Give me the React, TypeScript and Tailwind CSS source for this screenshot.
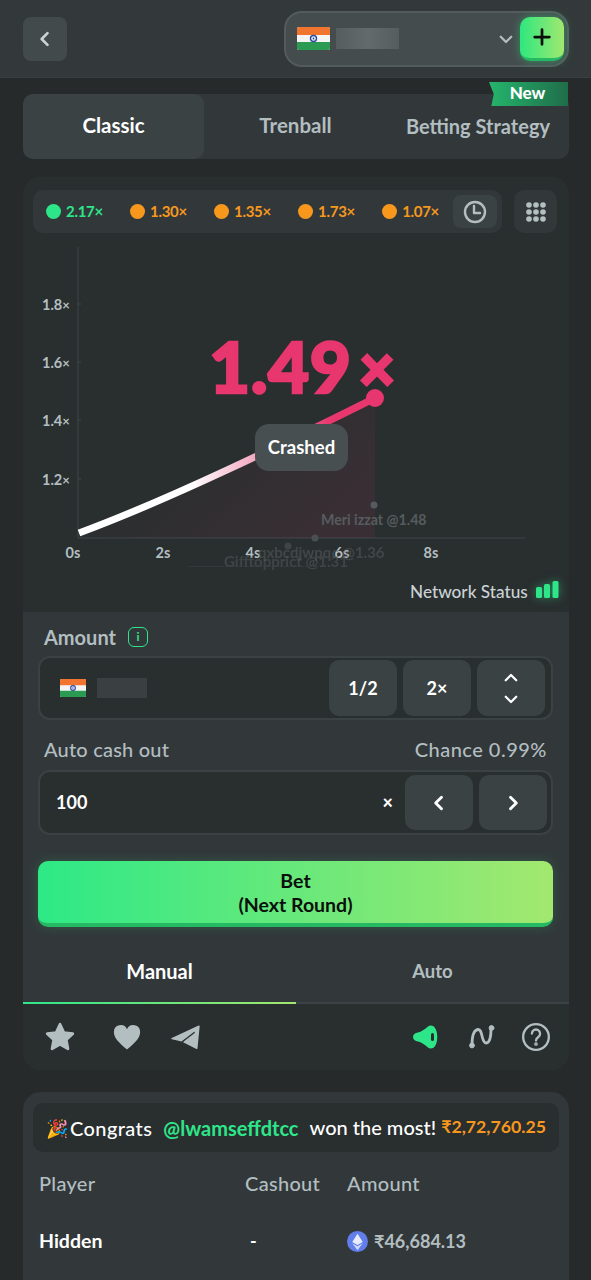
import React from "react";

const font = { fontFamily: '"Lato", "Noto Sans", sans-serif' };

function Flag({ w, h }: { w: number; h: number }) {
  return (
    <svg width={w} height={h} viewBox="0 0 33 23" preserveAspectRatio="none" className="shrink-0">
      <rect width="33" height="23" rx="2" fill="#f4f4f4" />
      <path d="M0 2a2 2 0 0 1 2-2h29a2 2 0 0 1 2 2v6H0z" fill="#f2752f" />
      <path d="M0 15h33v6a2 2 0 0 1-2 2H2a2 2 0 0 1-2-2z" fill="#2b9a52" />
      <circle cx="16.5" cy="11.5" r="3" fill="none" stroke="#2a4aa0" strokeWidth="1.4" />
      <circle cx="16.5" cy="11.5" r="0.9" fill="#2a4aa0" />
    </svg>
  );
}

function Dot({ color, value, text }: { color: string; value: string; text: string }) {
  return (
    <div className="flex items-center gap-[5px]">
      <span className={`h-[15px] w-[15px] rounded-full ${color}`} />
      <span className={`text-[15px] font-bold tracking-[-0.3px] ${text}`}>{value}</span>
    </div>
  );
}

function Chevron({ d, size = 22, stroke = "#fff", w = 3 }: { d: string; size?: number; stroke?: string; w?: number }) {
  return (
    <svg width={size} height={size} viewBox="0 0 24 24" fill="none" stroke={stroke} strokeWidth={w} strokeLinecap="round" strokeLinejoin="round">
      <path d={d} />
    </svg>
  );
}

function Chart() {
  const axis = "#3f4648";
  const label = "#b3bec1";
  return (
    <div className="relative h-[373px] w-[546px]">
      <svg width="546" height="373" viewBox="0 0 546 373" className="block" style={font}>
        <defs>
          <linearGradient id="line" x1="55" y1="0" x2="352" y2="0" gradientUnits="userSpaceOnUse">
            <stop offset="0.38" stopColor="#ffffff" />
            <stop offset="0.66" stopColor="#f08fae" />
            <stop offset="0.85" stopColor="#e8366e" />
          </linearGradient>
          <linearGradient id="fill" x1="0" y1="0" x2="1" y2="0.55">
            <stop offset="0.35" stopColor="#e8366e" stopOpacity="0" />
            <stop offset="1" stopColor="#e8366e" stopOpacity="0.08" />
          </linearGradient>
        </defs>
        <path d="M55 8V299H502" fill="none" stroke={axis} strokeWidth="1" />
        {[65, 123, 181, 240].map((y) => (
          <path key={y} d={`M55 ${y}h3`} stroke={axis} />
        ))}
        {[["1.8", 65], ["1.6", 123], ["1.4", 181], ["1.2", 240]].map(([t, y]) => (
          <text key={t} x="19" y={Number(y) + 6} fontSize="14.5" fontWeight="700" fill={label}>
            {t}
            <tspan fontSize="13">×</tspan>
          </text>
        ))}
        {[["0s", 50], ["2s", 140], ["4s", 230], ["6s", 319], ["8s", 408]].map(([t, x]) => (
          <text key={t} x={x} y="319" textAnchor="middle" fontSize="14.5" fontWeight="700" fill={label}>
            {t}
          </text>
        ))}
        <path d="M55 295C150 258 260 205 352 159V299H55z" fill="url(#fill)" />
        <path d="M56 294C150 259 260 205 352 159" fill="none" stroke="url(#line)" strokeWidth="7" />
        <circle cx="352" cy="159" r="9" fill="#e8366e" />
        <text x="186" y="154" fontSize="71" fontWeight="900" letterSpacing="0.5" fill="#e8366e" stroke="#e8366e" strokeWidth="2.5">
          1.49
        </text>
        <text x="336" y="152" fontSize="62" fontWeight="900" fill="#e8366e" stroke="#e8366e" strokeWidth="3">
          ×
        </text>
        <g fill="#565c5e" fontWeight="700">
          <circle cx="351" cy="266" r="3.5" />
          <text x="298" y="286" fontSize="14.2">
            Meri izzat @1.48
          </text>
          <circle cx="292" cy="299" r="3.5" fill="#4a5052" />
          <circle cx="265" cy="307" r="3.5" fill="#3f4547" />
          <text x="235" y="319" fontSize="15" opacity="0.55">
            qxbcdjwpqc @1.36
          </text>
          <text x="201" y="328" fontSize="15" opacity="0.5">
            Gifftopprict @1.31
          </text>
          <rect x="165" y="327" width="130" height="1" fill="#3a4042" opacity="0.6" />
        </g>
        <text x="387" y="359" fontSize="17.2" fontWeight="500" fill="#c9d2d4">
          Network Status
        </text>
        <g fill="#2ee68a" className="drop-shadow-[0_0_5px_rgba(46,230,138,0.5)]">
          <rect x="513" y="348" width="6" height="11" rx="1.5" />
          <rect x="521" y="345" width="6" height="14" rx="1.5" />
          <rect x="529.500" y="342" width="6" height="17" rx="1.5" />
        </g>
      </svg>
      <div className="absolute left-[232px] top-[185px] flex h-[47px] w-[93px] items-center justify-center rounded-[14px] bg-[#474f51] text-[18.500px] font-bold">
        Crashed
      </div>
    </div>
  );
}

export default function App() {
  return (
    <div className="h-[1280px] w-[591px] overflow-hidden bg-[#262a2b] text-white" style={font}>
      <header className="flex h-[78px] items-center justify-between border-b border-[#3a4041] bg-[#33393a] pl-[23px] pr-[22px]">
        <button className="flex h-[44px] w-[44px] items-center justify-center rounded-[8px] bg-[#424a4c]">
          <Chevron d="M15 5l-7 7 7 7" stroke="#c9d2d4" size={20} w={3.2} />
        </button>
        <div className="flex h-[56px] w-[285px] items-center rounded-[18px] border-2 border-[#545b5d] bg-[#454c4e] pl-[11px] pr-[3px]">
          <Flag w={33} h={23} />
          <span className="ml-[6px] h-[21px] w-[63px] bg-[linear-gradient(90deg,#565d5f,#636a6c,#565d5f)]" />
          <span className="ml-auto mr-[5px]">
            <Chevron d="M5 9l7 7 7-7" stroke="#b3bec1" size={18} w={3} />
          </span>
          <button className="flex h-[44px] w-[44px] items-center justify-center rounded-[10px] border-b-[3px] border-[#25b964] bg-[linear-gradient(90deg,#2fe77f,#a0e86f)] shadow-[0_0_10px_rgba(46,230,130,0.45)]">
            <Chevron d="M12 4v16M4 12h16" stroke="#0a0f0c" size={22} w={3} />
          </button>
        </div>
      </header>

      <main className="pl-[23px] pr-[22px] pt-[16px]">
        <div className="relative flex h-[65px] items-center rounded-[10px] bg-[#32383a] pb-[2px] text-[20px] font-bold">
          <div className="absolute inset-y-0 left-0 w-[181px] rounded-[10px] bg-[#3a4244]" />
          <div className="relative w-[181px] text-center text-[20.500px]">Classic</div>
          <div className="relative ml-[1px] w-[181px] text-center text-[20.500px] text-[#b3bec1]">Trenball</div>
          <div className="flex-1 whitespace-nowrap pr-[19px] text-right text-[#b3bec1]">Betting Strategy</div>
          <div
            className="absolute right-[1px] top-[-12px] flex h-[24px] w-[79px] items-center justify-center bg-[linear-gradient(90deg,#25b56c,#1f6d4a)] pb-[2px] text-[17px] font-black"
            style={{ clipPath: "polygon(0 0,100% 0,100% 100%,3% 100%,6% 50%)" }}
          >
            <span className="mr-[2px]">New</span>
          </div>
        </div>

        <section className="mt-[18px] overflow-hidden rounded-[18px] bg-[#32383a]">
          <div className="bg-[#292e2f]">
            <div className="flex items-center justify-between pl-[10px] pr-[12px] pt-[13px]">
              <div className="flex h-[43px] w-[469px] items-center rounded-[10px] bg-[#32383a] pl-[13px] pr-[5px]">
                <div className="flex flex-1 justify-between pr-[14px]">
                  <Dot color="bg-[#2ee68a]" text="text-[#2ee68a]" value="2.17×" />
                  <Dot color="bg-[#f7981d]" text="text-[#f7981d]" value="1.30×" />
                  <Dot color="bg-[#f7981d]" text="text-[#f7981d]" value="1.35×" />
                  <Dot color="bg-[#f7981d]" text="text-[#f7981d]" value="1.73×" />
                  <Dot color="bg-[#f7981d]" text="text-[#f7981d]" value="1.07×" />
                </div>
                <div className="flex h-[33px] w-[44px] items-center justify-center rounded-[8px] bg-[#3a4244]">
                  <svg width="24" height="24" viewBox="0 0 24 24" fill="none" stroke="#b3bec1" strokeWidth="2.4" strokeLinecap="round" strokeLinejoin="round">
                    <circle cx="12" cy="12" r="10" />
                    <path d="M11 6v7h6" />
                  </svg>
                </div>
              </div>
              <div className="flex h-[43px] w-[43px] items-center justify-center rounded-[10px] bg-[#32383a]">
                <svg width="20" height="20" viewBox="0 0 20 20" fill="#b3bec1">
                  {[3, 10, 17].flatMap((y) => [3, 10, 17].map((x) => <circle key={`${x}-${y}`} cx={x} cy={y} r="2.8" />))}
                </svg>
              </div>
            </div>
            <div className="h-[6px]" />
            <Chart />
          </div>

          <div className="pl-[15px] pr-[16px] pt-[13px]">
            <div className="flex h-[24px] items-center pl-[6px] text-[20px] font-bold text-[#b3bec1]">
              Amount
              <span className="ml-[12px] flex h-[20px] w-[20px] items-center justify-center rounded-[6px] border-[1.500px] border-[#2ee68a] text-[12px] font-bold leading-none text-[#2ee68a]">i</span>
            </div>
            <div className="mt-[7px] flex h-[64px] items-center rounded-[12px] border-2 border-[#3a4244] bg-[#292e2f] pl-[20px] pr-[6px]">
              <Flag w={26} h={18} />
              <span className="ml-[11px] h-[20px] w-[50px] bg-[#3a4042]" />
              <div className="ml-auto flex gap-[6px]">
                <div className="flex h-[56px] w-[68px] items-center justify-center rounded-[10px] bg-[#3a4244] text-[18px] font-bold">1/2</div>
                <div className="flex h-[56px] w-[68px] items-center justify-center rounded-[10px] bg-[#3a4244] text-[18px] font-bold">2×</div>
                <div className="flex h-[56px] w-[68px] flex-col items-center justify-center gap-[3px] rounded-[10px] bg-[#3a4244]">
                  <Chevron d="M5 15l7-7 7 7" size={18} w={3} />
                  <Chevron d="M5 9l7 7 7-7" size={18} w={3} />
                </div>
              </div>
            </div>
            <div className="mt-[17px] flex h-[24px] items-center justify-between px-[6px] text-[20px] font-medium tracking-[0.2px] text-[#b3bec1]">
              <span>Auto cash out</span>
              <span className="tracking-[0.5px]">Chance 0.99%</span>
            </div>
            <div className="mt-[9px] flex h-[65px] items-center rounded-[12px] border-2 border-[#3a4244] bg-[#292e2f] pl-[16px] pr-[4px]">
              <span className="text-[18px] font-bold">100</span>
              <span className="ml-auto mr-[12px] text-[18px] font-black">×</span>
              <div className="flex gap-[6px]">
                <div className="flex h-[55px] w-[68px] items-center justify-center rounded-[10px] bg-[#3a4244]">
                  <Chevron d="M15 5l-7 7 7 7" size={20} w={3.4} />
                </div>
                <div className="flex h-[55px] w-[68px] items-center justify-center rounded-[10px] bg-[#3a4244]">
                  <Chevron d="M9 5l7 7-7 7" size={20} w={3.4} />
                </div>
              </div>
            </div>
            <button className="mt-[26px] flex h-[66px] w-full flex-col items-center justify-center rounded-[10px] border-b-[4px] border-[#25b964] bg-[linear-gradient(90deg,#2de986,#a3e86f)] pt-[2px] text-[19.500px] font-bold leading-[24px] text-[#0a0f0c] shadow-[0_0_12px_rgba(46,230,130,0.18)]">
              <span>Bet</span>
              <span>(Next Round)</span>
            </button>
          </div>

          <div className="mt-[11px] flex h-[66px] border-b-2 border-[#3a4244] font-bold">
            <div className="relative flex w-1/2 items-center justify-center pt-[2px] text-[20px]">
              Manual
              <span className="absolute bottom-[-2px] left-0 h-[2px] w-full bg-[linear-gradient(90deg,#2ee68a,#a3e86f)]" />
            </div>
            <div className="flex w-1/2 items-center justify-center pt-[4px] text-[18.500px] text-[#b3bec1]">Auto</div>
          </div>

          <div className="flex h-[66px] items-center bg-[#292e2f] pl-[20px] pr-[19px]">
            <svg width="34" height="34" viewBox="0 0 24 24" fill="#b3bec1" stroke="#b3bec1" strokeWidth="2" strokeLinejoin="round">
              <path d="M12 3l2.800 6 6.200.7-4.600 4.300 1.200 6.300L12 17.200 6.400 20.300l1.200-6.300L3 9.700 9.200 9z" />
            </svg>
            <svg className="ml-[35px]" width="30" height="30" viewBox="0 0 24 24" fill="#b3bec1">
              <path d="M12 22C6 17 1.500 13 1.500 8a5.500 5.500 0 0 1 10.500-2.300A5.500 5.500 0 0 1 22.500 8C22.500 13 18 17 12 22z" />
            </svg>
            <svg className="ml-[29px]" width="29" height="24" viewBox="0 0 27 22" fill="#b3bec1" stroke="#b3bec1" strokeWidth="1.4" strokeLinejoin="round">
              <path d="M26 1L1 12.500 10 14.500 21 6 12 15.500 24 21.500z" />
              <path d="M10.500 15.500L22 6.500" fill="none" stroke="#292e2f" strokeWidth="1.200" />
            </svg>
            <svg className="ml-auto" width="26" height="24" viewBox="0 0 26 24">
              <path d="M5 7.500C8 7 12 4 15 1.500 17 0 20 0 22 3c3 4 3 14 0 18-2 3-5 3-7 1.500-3-2.500-7-5.500-10-6C2 16 0 14.500 0 12s2-4 5-4.500z" fill="#2ee68a" />
              <rect x="18" y="8" width="3" height="8" rx="1.500" fill="#292e2f" />
            </svg>
            <svg className="ml-[27px]" width="30" height="30" viewBox="0 0 30 30" fill="none" stroke="#b3bec1" strokeWidth="2.800" strokeLinecap="round">
              <path d="M6 23C6 13 8 8 12 7.500c5-.5 3 13 8 13.500 4 .3 5-7 5-14" />
              <circle cx="6" cy="23.500" r="2.400" fill="#b3bec1" strokeWidth="1" />
              <circle cx="25.500" cy="6" r="2.400" fill="#b3bec1" strokeWidth="1" />
            </svg>
            <svg className="ml-[26px]" width="28" height="28" viewBox="0 0 24 24" fill="none" stroke="#b3bec1" strokeWidth="2" strokeLinecap="round">
              <circle cx="12" cy="12" r="11" />
              <path d="M8.500 9a3.500 3.500 0 1 1 5.500 3c-1.500 1-2 1.500-2 3" />
              <circle cx="12" cy="18" r="0.6" />
            </svg>
          </div>
        </section>

        <section className="mt-[22px] h-[220px] rounded-t-[18px] bg-[#32383a] px-[10px] pt-[11px]">
          <div className="flex h-[49px] items-center whitespace-nowrap rounded-[10px] bg-[#292e2f] pl-[13px] text-[20px] font-medium">
            <span className="text-[18px] leading-none">🎉</span>
            <span className="ml-[2px] tracking-[0.4px]">Congrats</span>
            <span className="ml-[11px] font-bold text-[#2ee68a]">@lwamseffdtcc</span>
            <span className="ml-[11px] -translate-y-[1px]">won the most!</span>
            <span className="ml-[5px] text-[17.700px] font-bold text-[#f7981d]">₹2,72,760.25</span>
          </div>
          <div className="mt-[19px] flex h-[24px] items-center text-[20px] font-medium tracking-[0.3px] text-[#b3bec1]">
            <span className="ml-[6px] w-[206px]">Player</span>
            <span className="w-[102px]">Cashout</span>
            <span>Amount</span>
          </div>
          <div className="mt-[34px] flex h-[24px] items-center text-[18px] font-bold">
            <span className="ml-[6px] w-[211px] text-[19.500px]">Hidden</span>
            <span className="w-[97px]">-</span>
            <svg width="21" height="23" viewBox="0 0 24 24" className="shrink-0">
              <circle cx="12" cy="12" r="12" fill="#627eea" />
              <path d="M12 3l6 9.500-6 3.500-6-3.500z" fill="#fff" fillOpacity="0.85" />
              <path d="M12 17.500l6-3.500-6 8-6-8z" fill="#fff" fillOpacity="0.7" />
            </svg>
            <span className="ml-[6px] text-[#b3bec1]">₹46,684.13</span>
          </div>
        </section>
      </main>
    </div>
  );
}
